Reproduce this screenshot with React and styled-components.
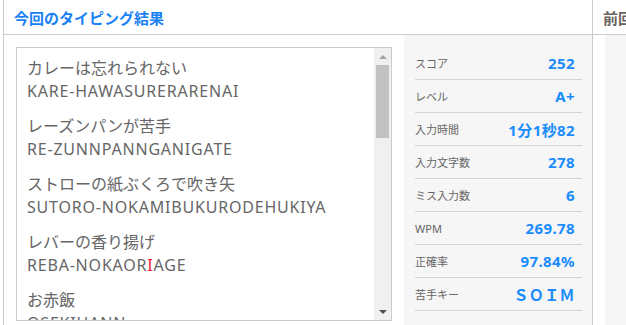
import React from 'react';
import styled, { createGlobalStyle } from 'styled-components';

const GlobalStyle = createGlobalStyle`
  html, body {
    margin: 0;
    padding: 0;
    background: #fff;
    overflow: hidden;
  }
  body {
    font-family: 'Noto Sans', 'Noto Sans CJK JP', sans-serif;
  }
`;

const Page = styled.div`
  display: flex;
  height: 325px;
  margin-left: 3px;
  border-left: 1px solid #cccccc;
`;

const Column = styled.section`
  display: flex;
  flex-direction: column;
  width: ${(p) => (p.grow ? 'auto' : '588px')};
  flex: ${(p) => (p.grow ? '1' : 'none')};
  border-right: ${(p) => (p.grow ? 'none' : '1px solid #cccccc')};
  min-width: 0;
  overflow: hidden;
`;

const Header = styled.header`
  height: 34px;
  display: flex;
  align-items: center;
  padding-left: 10px;
  border-bottom: 1px solid #cccccc;
  font-size: 15px;
  font-weight: 700;
  color: ${(p) => (p.muted ? '#6a6460' : '#1a82f5')};
  white-space: nowrap;
`;

const Body = styled.div`
  flex: 1;
  display: flex;
  padding: 12px 0 0 12px;
  gap: 12px;
  min-height: 0;
`;

const TextBox = styled.div`
  width: 376px;
  height: 274px;
  box-sizing: border-box;
  border: 1px solid #cccccc;
  display: flex;
  flex: none;
`;

const WordList = styled.div`
  flex: 1;
  overflow: hidden;
  padding: 9px 0 0 10px;
  color: #666666;
  font-size: 16px;
  line-height: 23px;
`;

const Word = styled.div`
  margin-bottom: 12px;
`;

const Romaji = styled.div`
  letter-spacing: 0.8px;
`;

const Miss = styled.span`
  color: #f01838;
`;

const Scrollbar = styled.div`
  width: 17px;
  display: flex;
  flex-direction: column;
  background: #f0f0f0;
`;

const ScrollButton = styled.div`
  height: 17px;
  display: flex;
  align-items: center;
  justify-content: center;

  &::before {
    content: '';
    width: 0;
    height: 0;
    border-left: 4px solid transparent;
    border-right: 4px solid transparent;
    ${(p) =>
      p.down
        ? 'border-top: 4px solid #505050;'
        : 'border-bottom: 4px solid #a3a3a3;'}
  }
`;

const Track = styled.div`
  flex: 1;
  padding: 0 2px;
`;

const Thumb = styled.div`
  height: 73px;
  background: #c1c1c1;
`;

const StatsPanel = styled.div`
  width: ${(p) => (p.grow ? 'auto' : '188px')};
  flex: ${(p) => (p.grow ? '1' : 'none')};
  box-sizing: border-box;
  background: #f6f6f6;
  margin-top: -12px;
  padding: 12px 10px 0 11px;
`;

const Row = styled.div`
  height: 33px;
  box-sizing: border-box;
  border-bottom: 1px solid #d4d4d4;
  display: flex;
  align-items: center;
  justify-content: space-between;
`;

const Label = styled.span`
  font-size: 11px;
  color: #666666;
`;

const Value = styled.span`
  padding-right: 7px;
  font-size: 15px;
  font-weight: 700;
  color: #1a8cff;
  letter-spacing: 0.4px;
`;

const words = [
  ['カレーは忘れられない', 'KARE-HAWASURERARENAI'],
  ['レーズンパンが苦手', 'RE-ZUNNPANNGANIGATE'],
  ['ストローの紙ぶくろで吹き矢', 'SUTORO-NOKAMIBUKURODEHUKIYA'],
  ['レバーの香り揚げ', ['REBA-NOKAOR', 'I', 'AGE']],
  ['お赤飯', 'OSEKIHANN'],
];

const stats = [
  ['スコア', '252'],
  ['レベル', 'A+'],
  ['入力時間', '1分1秒82'],
  ['入力文字数', '278'],
  ['ミス入力数', '6'],
  ['WPM', '269.78'],
  ['正確率', '97.84%'],
  ['苦手キー', 'ＳＯＩＭ'],
];

const App = () => {
  return (
    <>
      <GlobalStyle />
      <Page>
        <Column>
          <Header>今回のタイピング結果</Header>
          <Body>
            <TextBox>
              <WordList>
                {words.map(([jp, roma]) => (
                  <Word key={jp}>
                    <div>{jp}</div>
                    <Romaji>
                      {Array.isArray(roma) ? (
                        <>
                          {roma[0]}
                          <Miss>{roma[1]}</Miss>
                          {roma[2]}
                        </>
                      ) : (
                        roma
                      )}
                    </Romaji>
                  </Word>
                ))}
              </WordList>
              <Scrollbar>
                <ScrollButton />
                <Track>
                  <Thumb />
                </Track>
                <ScrollButton down />
              </Scrollbar>
            </TextBox>
            <StatsPanel>
              {stats.map(([label, value]) => (
                <Row key={label}>
                  <Label>{label}</Label>
                  <Value>{value}</Value>
                </Row>
              ))}
            </StatsPanel>
          </Body>
        </Column>
        <Column grow>
          <Header muted>前回</Header>
          <Body>
            <StatsPanel grow>
              {stats.map(([label]) => (
                <Row key={label} />
              ))}
            </StatsPanel>
          </Body>
        </Column>
      </Page>
    </>
  );
};

export default App;
